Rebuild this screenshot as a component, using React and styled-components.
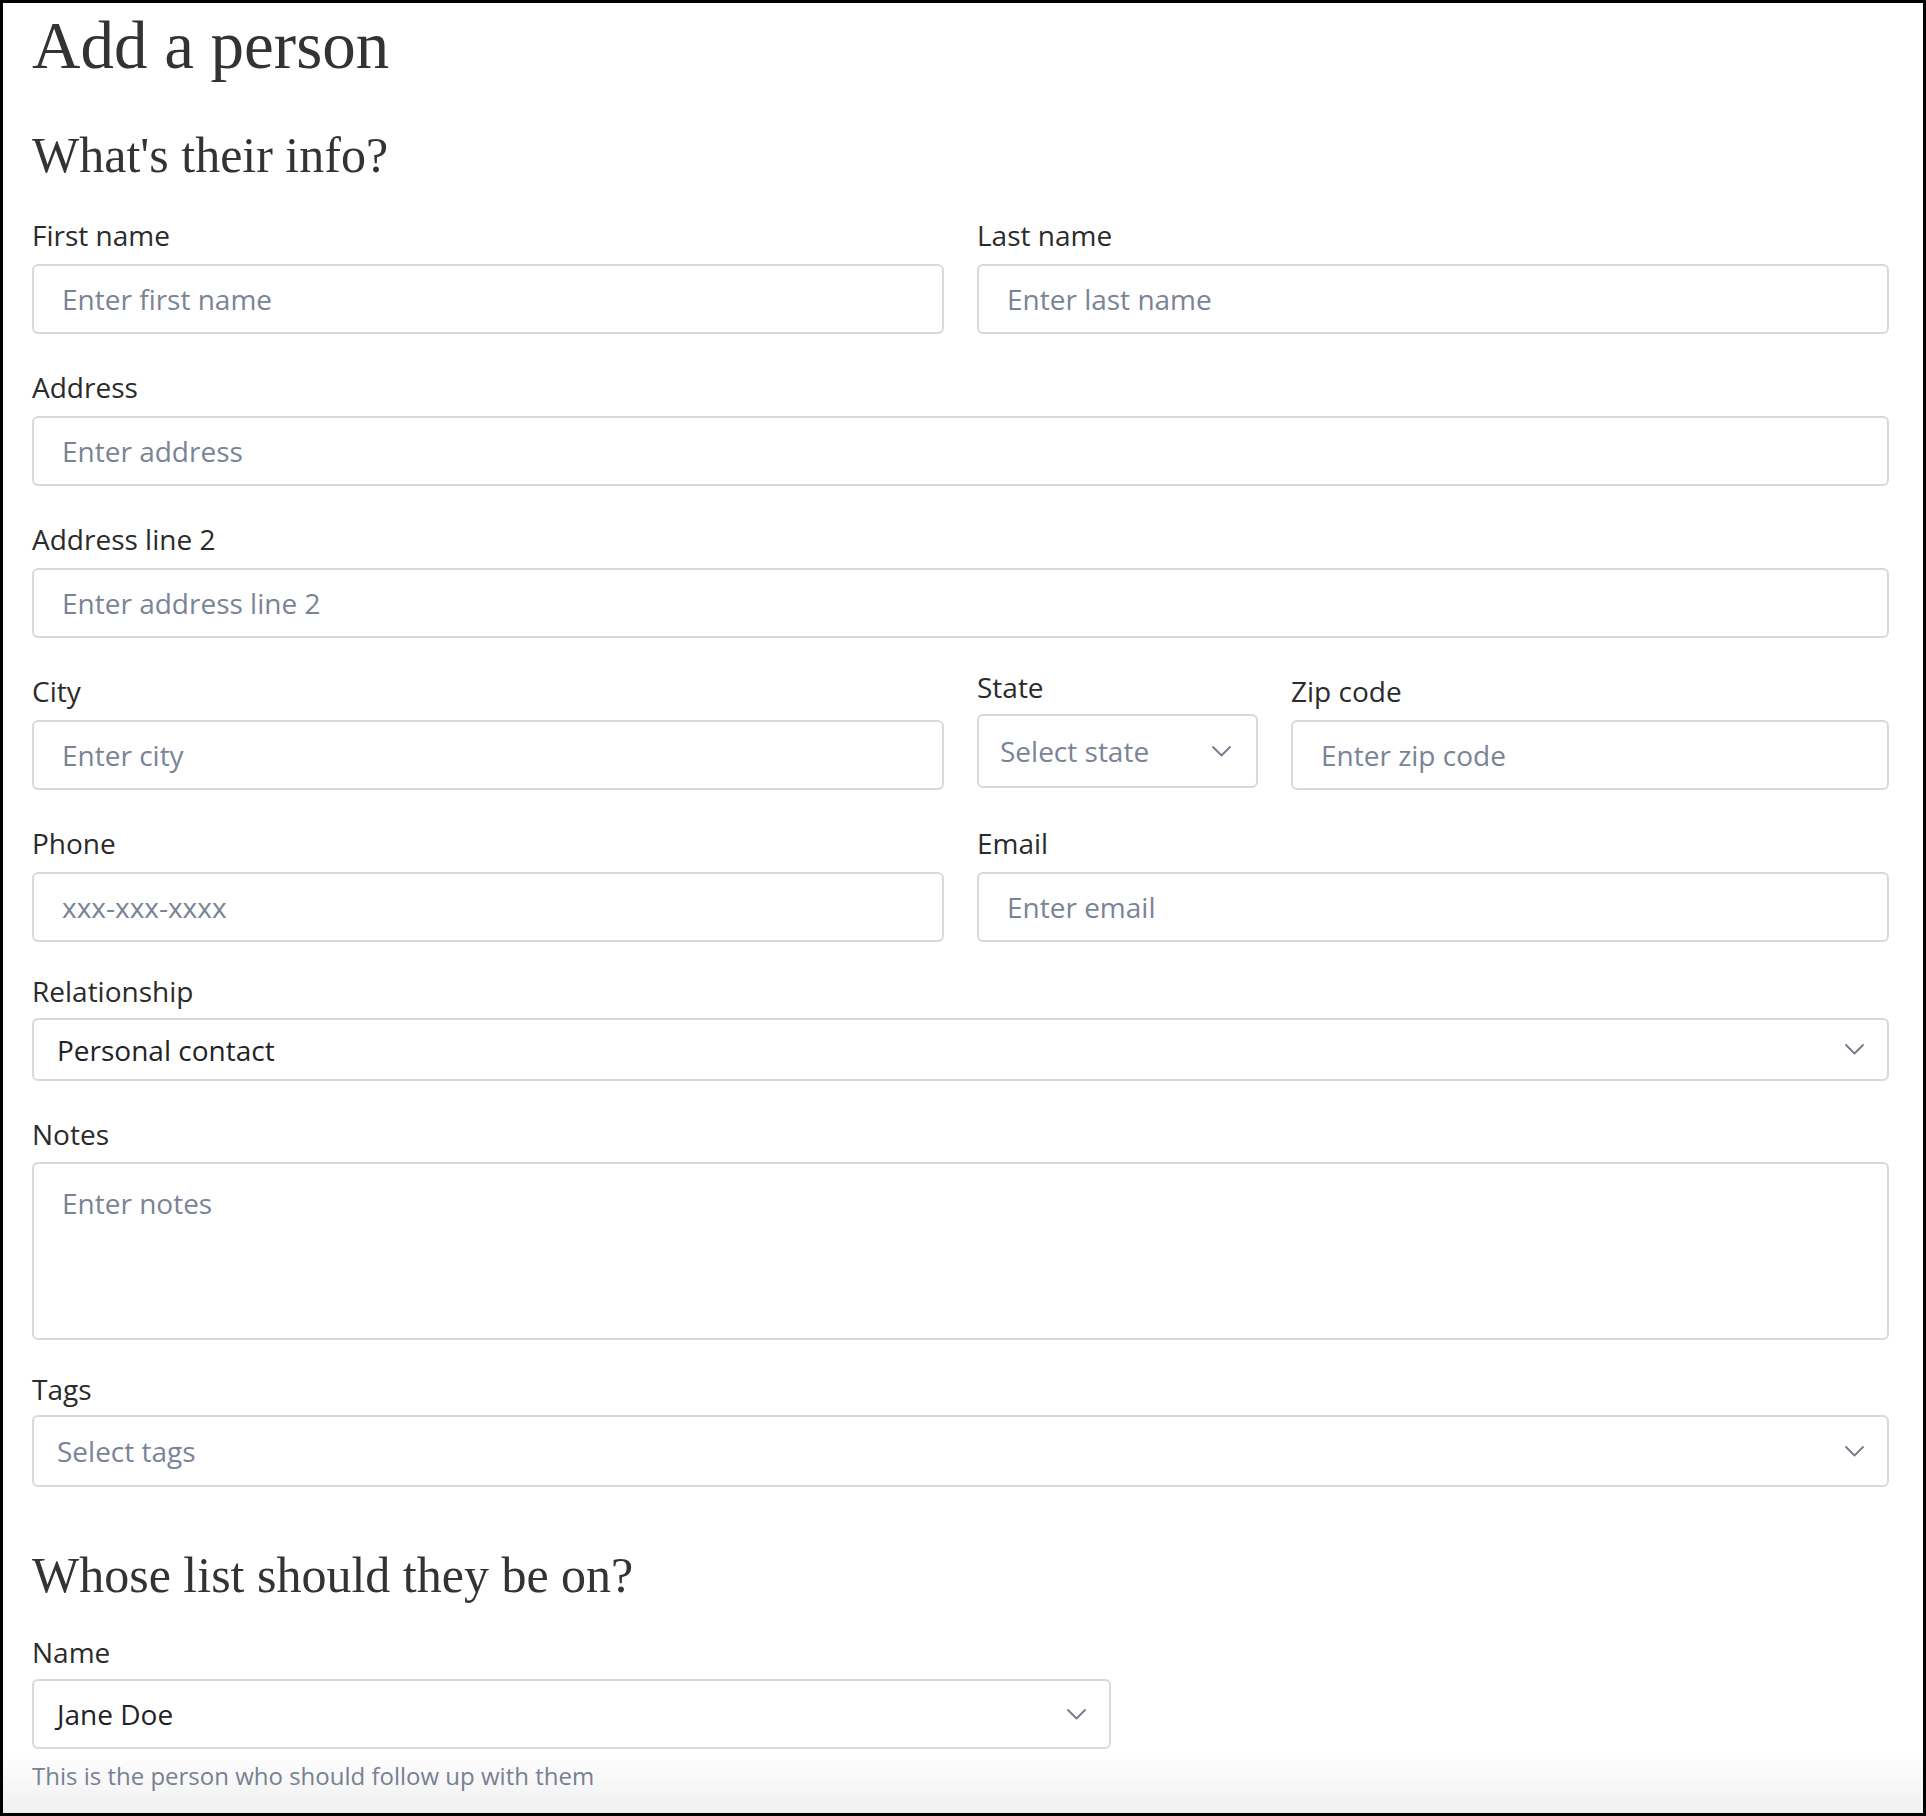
import React from 'react';
import styled, { createGlobalStyle } from 'styled-components';

const GlobalStyle = createGlobalStyle`
  html, body {
    margin: 0;
    padding: 0;
    background: #fff;
  }
  * {
    box-sizing: border-box;
  }
`;

const Frame = styled.div`
  position: relative;
  width: 1926px;
  height: 1816px;
  border: 3px solid #000;
  overflow: hidden;
  padding: 2px 34px 0 29px;
  font-family: "Open Sans", "Noto Sans", sans-serif;
  color: #2b2b2b;
  &::after {
    content: "";
    position: absolute;
    left: 0;
    right: 0;
    bottom: 0;
    height: 64px;
    background: linear-gradient(to bottom, rgba(0, 0, 0, 0), rgba(0, 0, 0, 0.06));
    pointer-events: none;
  }
`;

const Title = styled.h1`
  margin: 0;
  font-family: "Liberation Serif", serif;
  font-weight: normal;
  font-size: 67px;
  line-height: 80px;
  color: #333;
`;

const SectionTitle = styled.h2`
  margin: ${(p) => p.$top}px 0 0;
  font-family: "Liberation Serif", serif;
  font-weight: normal;
  font-size: 50px;
  line-height: 60px;
  color: #333;
`;

const Row = styled.div`
  display: grid;
  grid-template-columns: ${(p) => p.$cols || '1fr'};
  column-gap: 33px;
  margin-top: ${(p) => p.$top}px;
  width: ${(p) => (p.$width ? `${p.$width}px` : 'auto')};
`;

const Field = styled.div`
  display: flex;
  flex-direction: column;
  margin-top: ${(p) => p.$shift || 0}px;
`;

const Label = styled.label`
  font-size: 28px;
  line-height: 38px;
  color: #2b2b2b;
  margin-bottom: ${(p) => (p.$gap != null ? p.$gap : 10)}px;
`;

const boxBase = `
  width: 100%;
  border: 2px solid #d8d9dc;
  border-radius: 6px;
  background: #fff;
  font-family: "Open Sans", "Noto Sans", sans-serif;
  font-size: 28px;
  outline: none;
`;

const TextInput = styled.input`
  ${boxBase}
  height: 70px;
  padding: 0 28px;
  color: #1f2328;
  &::placeholder {
    color: #7a8496;
  }
`;

const NotesArea = styled.textarea`
  ${boxBase}
  display: block;
  height: 178px;
  padding: 20px 28px;
  line-height: 38px;
  resize: none;
  color: #1f2328;
  &::placeholder {
    color: #7a8496;
  }
`;

const SelectBox = styled.div`
  ${boxBase}
  height: ${(p) => p.$height}px;
  display: flex;
  align-items: center;
  justify-content: space-between;
  padding: 0 ${(p) => p.$right || 23}px 0 ${(p) => p.$left || 23}px;
  color: ${(p) => (p.$placeholder ? '#7a8496' : '#1f2328')};
`;

const Helper = styled.p`
  margin: 11px 0 0;
  font-size: 24px;
  line-height: 32px;
  color: #7a8496;
`;

const Chevron = () => (
  <svg width="19" height="11" viewBox="0 0 19 11" fill="none">
    <polyline points="1,1 9.5,9.5 18,1" stroke="#737b8c" strokeWidth="1.8" strokeLinecap="round" strokeLinejoin="round" />
  </svg>
);

const App = () => {
  return (
    <Frame>
      <GlobalStyle />
      <Title>Add a person</Title>
      <SectionTitle $top={40}>What's their info?</SectionTitle>

      <Row $cols="1fr 1fr" $top={31}>
        <Field>
          <Label>First name</Label>
          <TextInput placeholder="Enter first name" />
        </Field>
        <Field>
          <Label>Last name</Label>
          <TextInput placeholder="Enter last name" />
        </Field>
      </Row>

      <Row $top={34}>
        <Field>
          <Label>Address</Label>
          <TextInput placeholder="Enter address" />
        </Field>
      </Row>

      <Row $top={34}>
        <Field>
          <Label>Address line 2</Label>
          <TextInput placeholder="Enter address line 2" />
        </Field>
      </Row>

      <Row $cols="1fr 1fr" $top={34}>
        <Field>
          <Label>City</Label>
          <TextInput placeholder="Enter city" />
        </Field>
        <Row $cols="281px 1fr" $top={0}>
          <Field $shift={-4}>
            <Label $gap={8}>State</Label>
            <SelectBox $height={74} $placeholder $left={21} $right={25}>
              <span>Select state</span>
              <Chevron />
            </SelectBox>
          </Field>
          <Field>
            <Label>Zip code</Label>
            <TextInput placeholder="Enter zip code" />
          </Field>
        </Row>
      </Row>

      <Row $cols="1fr 1fr" $top={34}>
        <Field>
          <Label>Phone</Label>
          <TextInput placeholder="xxx-xxx-xxxx" />
        </Field>
        <Field>
          <Label>Email</Label>
          <TextInput placeholder="Enter email" />
        </Field>
      </Row>

      <Row $top={30}>
        <Field>
          <Label $gap={8}>Relationship</Label>
          <SelectBox $height={63}>
            <span>Personal contact</span>
            <Chevron />
          </SelectBox>
        </Field>
      </Row>

      <Row $top={34}>
        <Field>
          <Label $gap={9}>Notes</Label>
          <NotesArea placeholder="Enter notes" />
        </Field>
      </Row>

      <Row $top={30}>
        <Field>
          <Label $gap={7}>Tags</Label>
          <SelectBox $height={72} $placeholder>
            <span>Select tags</span>
            <Chevron />
          </SelectBox>
        </Field>
      </Row>

      <SectionTitle $top={58}>Whose list should they be on?</SectionTitle>

      <Row $top={28} $width={1079}>
        <Field>
          <Label $gap={8}>Name</Label>
          <SelectBox $height={70}>
            <span>Jane Doe</span>
            <Chevron />
          </SelectBox>
          <Helper>This is the person who should follow up with them</Helper>
        </Field>
      </Row>
    </Frame>
  );
};

export default App;
